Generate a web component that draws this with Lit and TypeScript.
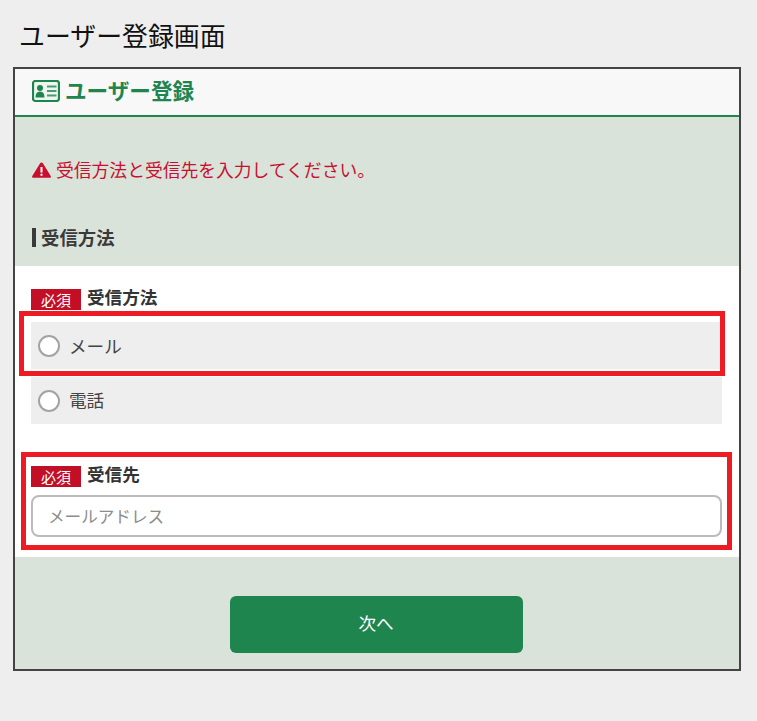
import { LitElement, html, css } from "lit";
import { customElement } from "lit/decorators.js";

@customElement("app-root")
export class AppRoot extends LitElement {
  static styles = css`
    :host {
      display: block;
      width: 757px;
      height: 721px;
      background: #eeeeee;
      font-family: "Noto Sans CJK JP", "Noto Sans", sans-serif;
      overflow: hidden;
    }
    .page {
      padding: 16px 16px 0 13px;
    }
    h1 {
      margin: 0 0 14px 6px;
      height: 37px;
      font-size: 25.9px;
      line-height: 37px;
      font-weight: 400;
      color: #111;
    }
    .card {
      position: relative;
      border: 2px solid #444;
      background: #d9e3da;
      height: 604px;
      box-sizing: border-box;
      display: flex;
      flex-direction: column;
    }
    .head {
      height: 46px;
      background: #f8f8f8;
      border-bottom: 2px solid #1f854f;
      display: flex;
      align-items: center;
      gap: 5px;
      padding-left: 17px;
      color: #1f854f;
      font-size: 21.6px;
      font-weight: 700;
    }
    .head span { position: relative; top: -3px; }
    .head svg { display: block; position: relative; top: -1px; }
    .upper {
      height: 149px;
      padding: 0 0 0 17px;
      display: flex;
      flex-direction: column;
    }
    .alert {
      margin-top: 39px;
      height: 27px;
      display: flex;
      align-items: center;
      gap: 5px;
      font-size: 17.8px;
      color: #c8102e;
    }
    .alert span { position: relative; top: -1px; }
    .section {
      margin-top: 41px;
      height: 26px;
      display: flex;
      align-items: center;
      gap: 5px;
      font-size: 18.4px;
      font-weight: 700;
      color: #3a3a3a;
    }
    .section i {
      display: block;
      width: 4px;
      height: 19px;
      background: #3a3a3a;
    }
    .form {
      position: relative;
      height: 291px;
      background: #fff;
      padding: 23px 17px 0 16px;
      box-sizing: border-box;
    }
    .label {
      display: flex;
      align-items: center;
      gap: 6px;
      height: 21px;
      font-size: 17.6px;
      font-weight: 700;
      color: #333;
    }
    .label span.text { position: relative; top: -3px; }
    .badge {
      width: 50px;
      height: 21px;
      background: #c20f26;
      color: #fff;
      font-size: 15px;
      font-weight: 400;
      display: flex;
      align-items: center;
      justify-content: center;
    }
    .radios {
      margin-top: 12px;
      display: flex;
      flex-direction: column;
      gap: 8px;
    }
    .radio {
      height: 47px;
      background: #eeeeee;
      display: flex;
      align-items: center;
      gap: 9px;
      padding-left: 7px;
      font-size: 17.6px;
      color: #444;
    }
    .radio:last-child span:last-child { position: relative; top: -1px; }
    .dot {
      width: 22px;
      height: 22px;
      box-sizing: border-box;
      border: 2px solid #a3a3a3;
      border-radius: 50%;
      background: #fff;
    }
    .field { margin-top: 42px; }
    .input {
      display: block;
      margin-top: 8px;
      width: 100%;
      height: 42px;
      box-sizing: border-box;
      border: 2px solid #bbbbbb;
      border-radius: 8px;
      background: #fff;
      padding: 0 15px;
      font: inherit;
      font-size: 16.6px;
      outline: none;
    }
    .input::placeholder { color: #8c8c8c; opacity: 1; }
    .mark {
      position: absolute;
      box-sizing: border-box;
      border: 5px solid #ed1c24;
      pointer-events: none;
    }
    .mark.a { left: 4px; top: 45px; width: 706px; height: 65px; }
    .mark.b { left: 6px; top: 186px; width: 711px; height: 98px; }
    .foot {
      flex: 1;
      display: flex;
      justify-content: center;
      padding-top: 39px;
      padding-right: 2px;
    }
    .next {
      width: 293px;
      height: 57px;
      border: 0;
      border-radius: 6px;
      background: #1f854f;
      color: #fff;
      font: inherit;
      font-size: 17.6px;
      padding: 0 0 4px;
    }
  `;

  render() {
    return html`
      <div class="page">
        <h1>ユーザー登録画面</h1>
        <div class="card">
          <div class="head">
            <svg width="28" height="22" viewBox="0 0 28 22">
              <rect x="1" y="1" width="26" height="20" rx="2.500" fill="#eef5f0" stroke="#1f854f" stroke-width="2.200"/>
              <circle cx="8" cy="8" r="3" fill="#1f854f"/>
              <path d="M3.500 17.500c0-4 1.500-6 4.500-6s4.500 2 4.500 6z" fill="#1f854f"/>
              <path d="M15 6.500h9.500M15 11h9.500M15 15.500h9.500" stroke="#1f854f" stroke-width="2" fill="none" opacity=".8"/>
            </svg>
            <span>ユーザー登録</span>
          </div>
          <div class="upper">
            <div class="alert">
              <svg width="19" height="16" viewBox="0 0 19 16">
                <path d="M9.500 0.500c.6 0 1.100.3 1.400.8l7.800 12.700c.6 1 0 1.800-1.100 1.800H1.400C.3 15.800-.3 15 .3 14L8.100 1.300c.3-.5.800-.8 1.400-.8z" fill="#c8102e"/>
                <path d="M8.500 5h2v5.500h-2zM8.500 11.700h2v2h-2z" fill="#fff"/>
              </svg>
              <span>受信方法と受信先を入力してください。</span>
            </div>
            <div class="section"><i></i><span>受信方法</span></div>
          </div>
          <div class="form">
            <div class="label"><span class="badge">必須</span><span class="text">受信方法</span></div>
            <div class="radios">
              <div class="radio"><span class="dot"></span><span>メール</span></div>
              <div class="radio"><span class="dot"></span><span>電話</span></div>
            </div>
            <div class="field">
              <div class="label"><span class="badge">必須</span><span class="text">受信先</span></div>
              <input class="input" placeholder="メールアドレス" />
            </div>
            <div class="mark a"></div>
            <div class="mark b"></div>
          </div>
          <div class="foot"><button class="next">次へ</button></div>
        </div>
      </div>
    `;
  }
}
